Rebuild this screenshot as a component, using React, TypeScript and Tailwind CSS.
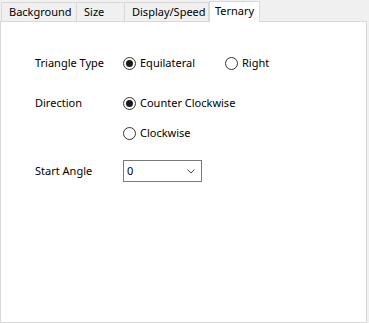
import React from "react";

const font = { fontFamily: '"Noto Sans", "Segoe UI", sans-serif' };

function Radio({ checked, label }: { checked?: boolean; label: string }) {
  return (
    <div className="flex items-center gap-[4px]">
      <span className="w-[13px] h-[13px] rounded-full border border-[#333] bg-white flex items-center justify-center">
        {checked && <span className="w-[7px] h-[7px] rounded-full bg-[#1a1a1a]" />}
      </span>
      <span className="text-[11px] text-black leading-none pb-[1px]">{label}</span>
    </div>
  );
}

function Tab({ label, w, active }: { label: string; w: number; active?: boolean }) {
  if (active)
    return (
      <div
        className="relative z-10 h-[21px] -mb-px bg-white border border-b-0 border-[#d9d9d9] flex items-start justify-center pt-[1px] text-[11px] text-black"
        style={{ width: w }}
      >
        {label}
      </div>
    );
  return (
    <div
      className="h-[19px] border border-b-0 border-l-0 first:border-l border-[#d9d9d9] bg-[#f0f0f0] flex items-center pl-[7px] text-[11px] text-black"
      style={{ width: w }}
    >
      {label}
    </div>
  );
}

export default function App() {
  return (
    <div className="w-[369px] h-[323px] bg-[#f0f0f0] flex flex-col" style={font}>
      <div className="flex items-end h-[21px] pl-[1px]">
        <Tab label="Background" w={76} />
        <Tab label="Size" w={48} />
        <Tab label="Display/Speed" w={84} />
        <Tab label="Ternary" w={51} active />
      </div>
      <div className="w-[367px] h-[302px] bg-white border border-[#d9d9d9]">
        <div className="pl-[34px] pt-[30px] flex flex-col">
          <div className="flex items-center h-[22px]">
            <span className="w-[88px] text-[11px]">Triangle Type</span>
            <div className="w-[102px]"><Radio checked label="Equilateral" /></div>
            <Radio label="Right" />
          </div>
          <div className="flex items-center h-[22px] mt-[18px]">
            <span className="w-[88px] text-[11px]">Direction</span>
            <Radio checked label="Counter Clockwise" />
          </div>
          <div className="flex items-center h-[22px] mt-[8px]">
            <span className="w-[88px]" />
            <Radio label="Clockwise" />
          </div>
          <div className="flex items-center h-[22px] mt-[16px]">
            <span className="w-[88px] text-[11px]">Start Angle</span>
            <div className="w-[79px] h-[22px] border border-[#7a7a7a] bg-white flex items-center justify-between pl-[3px] pr-[6px] text-[11px]">
              <span>0</span>
              <svg width="8" height="5" viewBox="0 0 8 5" fill="none">
                <path d="M0.5 0.5 L4 4 L7.5 0.5" stroke="#444" strokeWidth="1" />
              </svg>
            </div>
          </div>
        </div>
      </div>
    </div>
  );
}
